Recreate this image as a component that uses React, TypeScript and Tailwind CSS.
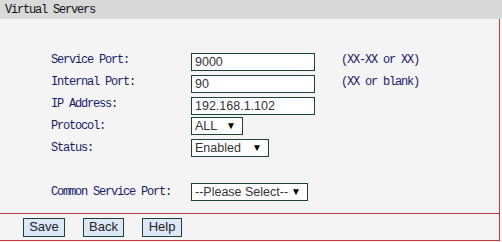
import React from 'react';

const mono = "font-['Liberation_Mono',monospace] text-[12px] tracking-[-1.2px] text-[#1b1b6b]";
const field = "h-[18px] border border-[#1d4236] bg-white pl-[3px] font-['Liberation_Sans',Arial,sans-serif] text-[12.5px] leading-[16px] text-[#333]";

const FakeSelect: React.FC<{ value: string; width: string }> = ({ value, width }) => (
  <div className={`${field} ${width} flex items-center justify-between pr-[6px]`}>
    <span>{value}</span>
    <span className="text-[10px] text-black">▼</span>
  </div>
);

const Row: React.FC<{ label: string; children: React.ReactNode; hint?: string }> = ({ label, children, hint }) => (
  <div className="flex h-[18px] items-center">
    <div className={`${mono} w-[140px]`}>{label}</div>
    <div className="w-[150px]">{children}</div>
    {hint && <div className={mono}>{hint}</div>}
  </div>
);

const Button: React.FC<{ label: string; width: string }> = ({ label, width }) => (
  <div className={`${width} h-[19px] flex items-center justify-center border border-[#1d4236] bg-[#dce8f8] font-['Liberation_Sans',Arial,sans-serif] text-[13px] text-[#222]`}>
    {label}
  </div>
);

export default function App() {
  return (
    <div className="w-[502px] h-[242px] bg-[#f4f4f4]">
      <div className="h-[19px] bg-[#d9d9d9] pl-[5px] flex items-center font-['Liberation_Mono',monospace] text-[12px] tracking-[-1.2px] text-[#111]">
        Virtual Servers
      </div>
      <div className="w-[500px] border-r border-[#c23a3a]">
        <div className="pl-[51px] pt-[32px] h-[194px] flex flex-col gap-[4px]">
          <Row label="Service Port:" hint="(XX-XX or XX)">
            <input readOnly defaultValue="9000" className={`${field} w-[124px] outline-none`} />
          </Row>
          <Row label="Internal Port:" hint="(XX or blank)">
            <input readOnly defaultValue="90" className={`${field} w-[124px] outline-none`} />
          </Row>
          <Row label="IP Address:">
            <input readOnly defaultValue="192.168.1.102" className={`${field} w-[124px] outline-none`} />
          </Row>
          <Row label="Protocol:">
            <FakeSelect value="ALL" width="w-[52px]" />
          </Row>
          <Row label="Status:">
            <FakeSelect value="Enabled" width="w-[78px]" />
          </Row>
          <div className="mt-[22px]">
            <Row label="Common Service Port:">
              <FakeSelect value="--Please Select--" width="w-[117px]" />
            </Row>
          </div>
        </div>
        <div className="h-[28px] border-y border-[#c23a3a] pl-[23px] flex items-center gap-[18px] -mr-px">
          <Button label="Save" width="w-[42px]" />
          <Button label="Back" width="w-[41px]" />
          <Button label="Help" width="w-[40px]" />
        </div>
      </div>
    </div>
  );
}
